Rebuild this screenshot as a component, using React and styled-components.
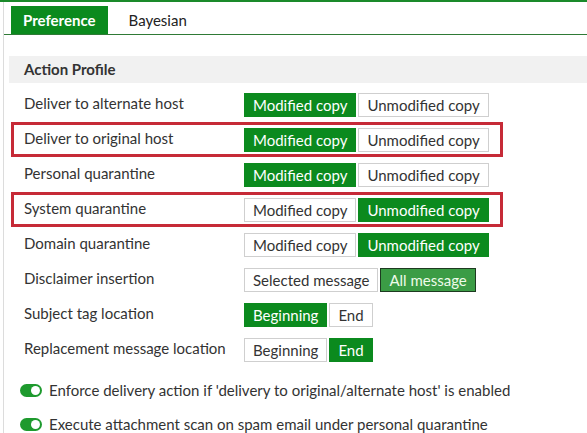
import React, { useState } from 'react'
import styled, { createGlobalStyle, css } from 'styled-components'

const rows = [
  { label: 'Deliver to alternate host', options: ['Modified copy', 'Unmodified copy'], value: 0 },
  { label: 'Deliver to original host', options: ['Modified copy', 'Unmodified copy'], value: 0, marked: true },
  { label: 'Personal quarantine', options: ['Modified copy', 'Unmodified copy'], value: 0 },
  { label: 'System quarantine', options: ['Modified copy', 'Unmodified copy'], value: 1, marked: true },
  { label: 'Domain quarantine', options: ['Modified copy', 'Unmodified copy'], value: 1 },
  { label: 'Disclaimer insertion', options: ['Selected message', 'All message'], value: 1, focused: true },
  { label: 'Subject tag location', options: ['Beginning', 'End'], value: 0 },
  { label: 'Replacement message location', options: ['Beginning', 'End'], value: 1 },
]

const toggles = [
  "Enforce delivery action if 'delivery to original/alternate host' is enabled",
  'Execute attachment scan on spam email under personal quarantine',
]

export default () => {
  const [tab, setTab] = useState('Preference')
  const [values, setValues] = useState(rows.map(r => r.value))

  return (
    <>
      <GlobalStyle />
      <TopLine />
      <Panel>
        <TabBar>
          {['Preference', 'Bayesian'].map(name => (
            <Tab key={name} active={name === tab} onClick={() => setTab(name)}>{name}</Tab>
          ))}
        </TabBar>

        <Content>
          <SectionHeader>Action Profile</SectionHeader>

          <Rows>
            {rows.map((row, i) => (
              <Row key={row.label} marked={row.marked}>
                <Label>{row.label}</Label>
                <ButtonGroup>
                  {row.options.map((opt, j) => (
                    <OptionButton
                      key={opt}
                      active={values[i] === j}
                      focused={row.focused && values[i] === j}
                      onClick={() => setValues(v => v.map((x, k) => (k === i ? j : x)))}
                    >
                      {opt}
                    </OptionButton>
                  ))}
                </ButtonGroup>
              </Row>
            ))}
          </Rows>

          <Toggles>
            {toggles.map(text => (
              <ToggleRow key={text}>
                <Switch />
                <span>{text}</span>
              </ToggleRow>
            ))}
          </Toggles>
        </Content>
      </Panel>
    </>
  )
}

/***************************** Styled Components *****************************/

const green = '#0b8a1e'

const GlobalStyle = createGlobalStyle`
  body {
    margin: 0;
    background: #fff;
    font-family: Lato, 'Open Sans', sans-serif;
    font-size: 15px;
    color: #333;
    overflow: hidden;
  }
`

const TopLine = styled.div`
  height: 2px;
  background: #1a8a2a;
`

const Panel = styled.div`
  margin-left: 3px;
  border-left: 1px solid #dcdcdc;
  min-height: 431px;
`

const TabBar = styled.div`
  display: flex;
  gap: 9px;
  padding: 4px 0 0 7px;
  border-bottom: 1px solid #2f7a36;
`

const Tab = styled.div`
  height: 28px;
  line-height: 28px;
  padding: 0 12px;
  cursor: pointer;
  color: #222;
  ${props => props.active && css`
    background: ${green};
    color: #fff;
    font-weight: bold;
  `}
`

const Content = styled.div`
  padding-left: 5px;
`

const SectionHeader = styled.div`
  margin-top: 21px;
  height: 27px;
  line-height: 27px;
  padding-left: 15px;
  background: #f1f1f1;
  font-weight: bold;
  color: #333;
`

const Rows = styled.div`
  margin: 4px 0 0 2px;
  width: 492px;
`

const Row = styled.div`
  display: flex;
  align-items: center;
  height: 35px;
  padding-left: 13px;
  ${props => props.marked && css`
    box-shadow: inset 0 0 0 3px #c62a37;
  `}
`

const Label = styled.div`
  width: 220px;
  padding-bottom: 4px;
  color: #333;
`

const ButtonGroup = styled.div`
  display: flex;
  gap: 2px;
`

const OptionButton = styled.div`
  box-sizing: border-box;
  height: 24px;
  line-height: 22px;
  padding: 0 8px;
  border: 1px solid #cfcfcf;
  background: #fff;
  color: #333;
  cursor: pointer;
  ${props => props.active && css`
    background: ${green};
    border-color: ${green};
    color: #fff;
  `}
  ${props => props.focused && css`
    background: #3b9c45;
    border-color: #1d3a20;
    color: #eefbe9;
  `}
`

const Toggles = styled.div`
  margin-top: 6px;
  padding-left: 11px;
`

const ToggleRow = styled.div`
  display: flex;
  align-items: center;
  gap: 7px;
  height: 34px;
  color: #333;
`

const Switch = styled.div`
  position: relative;
  width: 22px;
  height: 13px;
  border-radius: 7px;
  background: #1e9a2e;
  flex: none;
  &::after {
    content: '';
    position: absolute;
    right: 2px;
    top: 2px;
    width: 9px;
    height: 9px;
    border-radius: 50%;
    background: #fff;
  }
`
